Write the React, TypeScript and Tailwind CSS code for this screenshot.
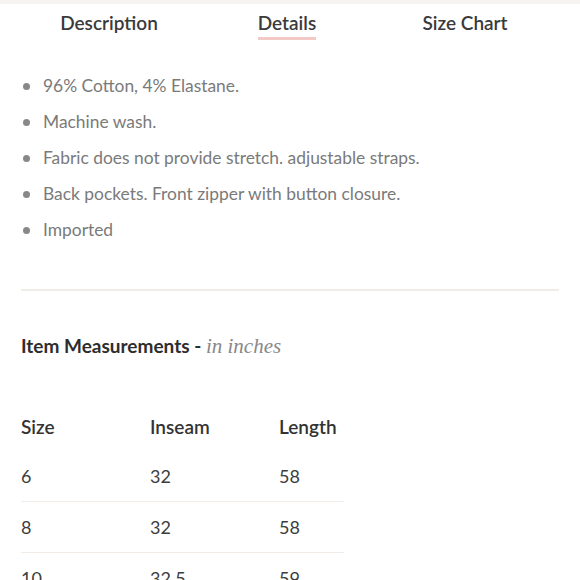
const bullets = [
  '96% Cotton, 4% Elastane.',
  'Machine wash.',
  'Fabric does not provide stretch. adjustable straps.',
  'Back pockets. Front zipper with button closure.',
  'Imported',
];

const rows = [
  ['6', '32', '58'],
  ['8', '32', '58'],
  ['10', '32.5', '59'],
];

export default function App() {
  return (
    <div className="h-[580px] w-[580px] overflow-hidden bg-white font-['Lato',sans-serif]">
      <div className="h-[4px] bg-[#f6f4f1]" />
      <div className="ml-[20px] grid w-[534px] grid-cols-3 pt-[7px]">
        <div className="flex justify-center">
          <span className="text-[19px] font-semibold leading-[24px] text-[#3a3a3a]">Description</span>
        </div>
        <div className="flex justify-center">
          <span className="border-b-[3px] border-[#f2c9c5] pb-[2px] text-[19px] font-semibold leading-[24px] text-[#3a3a3a]">
            Details
          </span>
        </div>
        <div className="flex justify-center">
          <span className="text-[19px] font-semibold leading-[24px] text-[#3a3a3a]">Size Chart</span>
        </div>
      </div>

      <ul className="mt-[34px] flex flex-col gap-[12px] pl-[23px]">
        {bullets.map((b) => (
          <li key={b} className="flex items-center gap-[13px] text-[17.4px] leading-[24px] text-[#7a7a7a]">
            <span className="h-[7px] w-[7px] rounded-full bg-[#888]" />
            {b}
          </li>
        ))}
      </ul>

      <div className="mx-[21px] mt-[47px] h-[2px] bg-[#f0ece7]" />

      <div className="mt-[43px] pl-[21px] text-[19px] leading-[24px]">
        <span className="font-bold text-[#2d2d2d]">Item Measurements - </span>
        <span className="font-['Liberation_Serif',serif] text-[21px] italic text-[#888]">in inches</span>
      </div>

      <div className="mt-[57px] w-[344px] pl-[21px]">
        <div className="grid grid-cols-[129px_129px_1fr] pb-[12px] text-[19px] font-semibold leading-[24px] text-[#333]">
          <span>Size</span>
          <span>Inseam</span>
          <span>Length</span>
        </div>
        {rows.map((r) => (
          <div
            key={r[0]}
            className="grid grid-cols-[129px_129px_1fr] border-b-[1.5px] border-[#f3ebe6] py-[13px] text-[18px] leading-[24px] text-[#3d3d3d]"
          >
            {r.map((c, i) => (
              <span key={i}>{c}</span>
            ))}
          </div>
        ))}
      </div>
    </div>
  );
}
